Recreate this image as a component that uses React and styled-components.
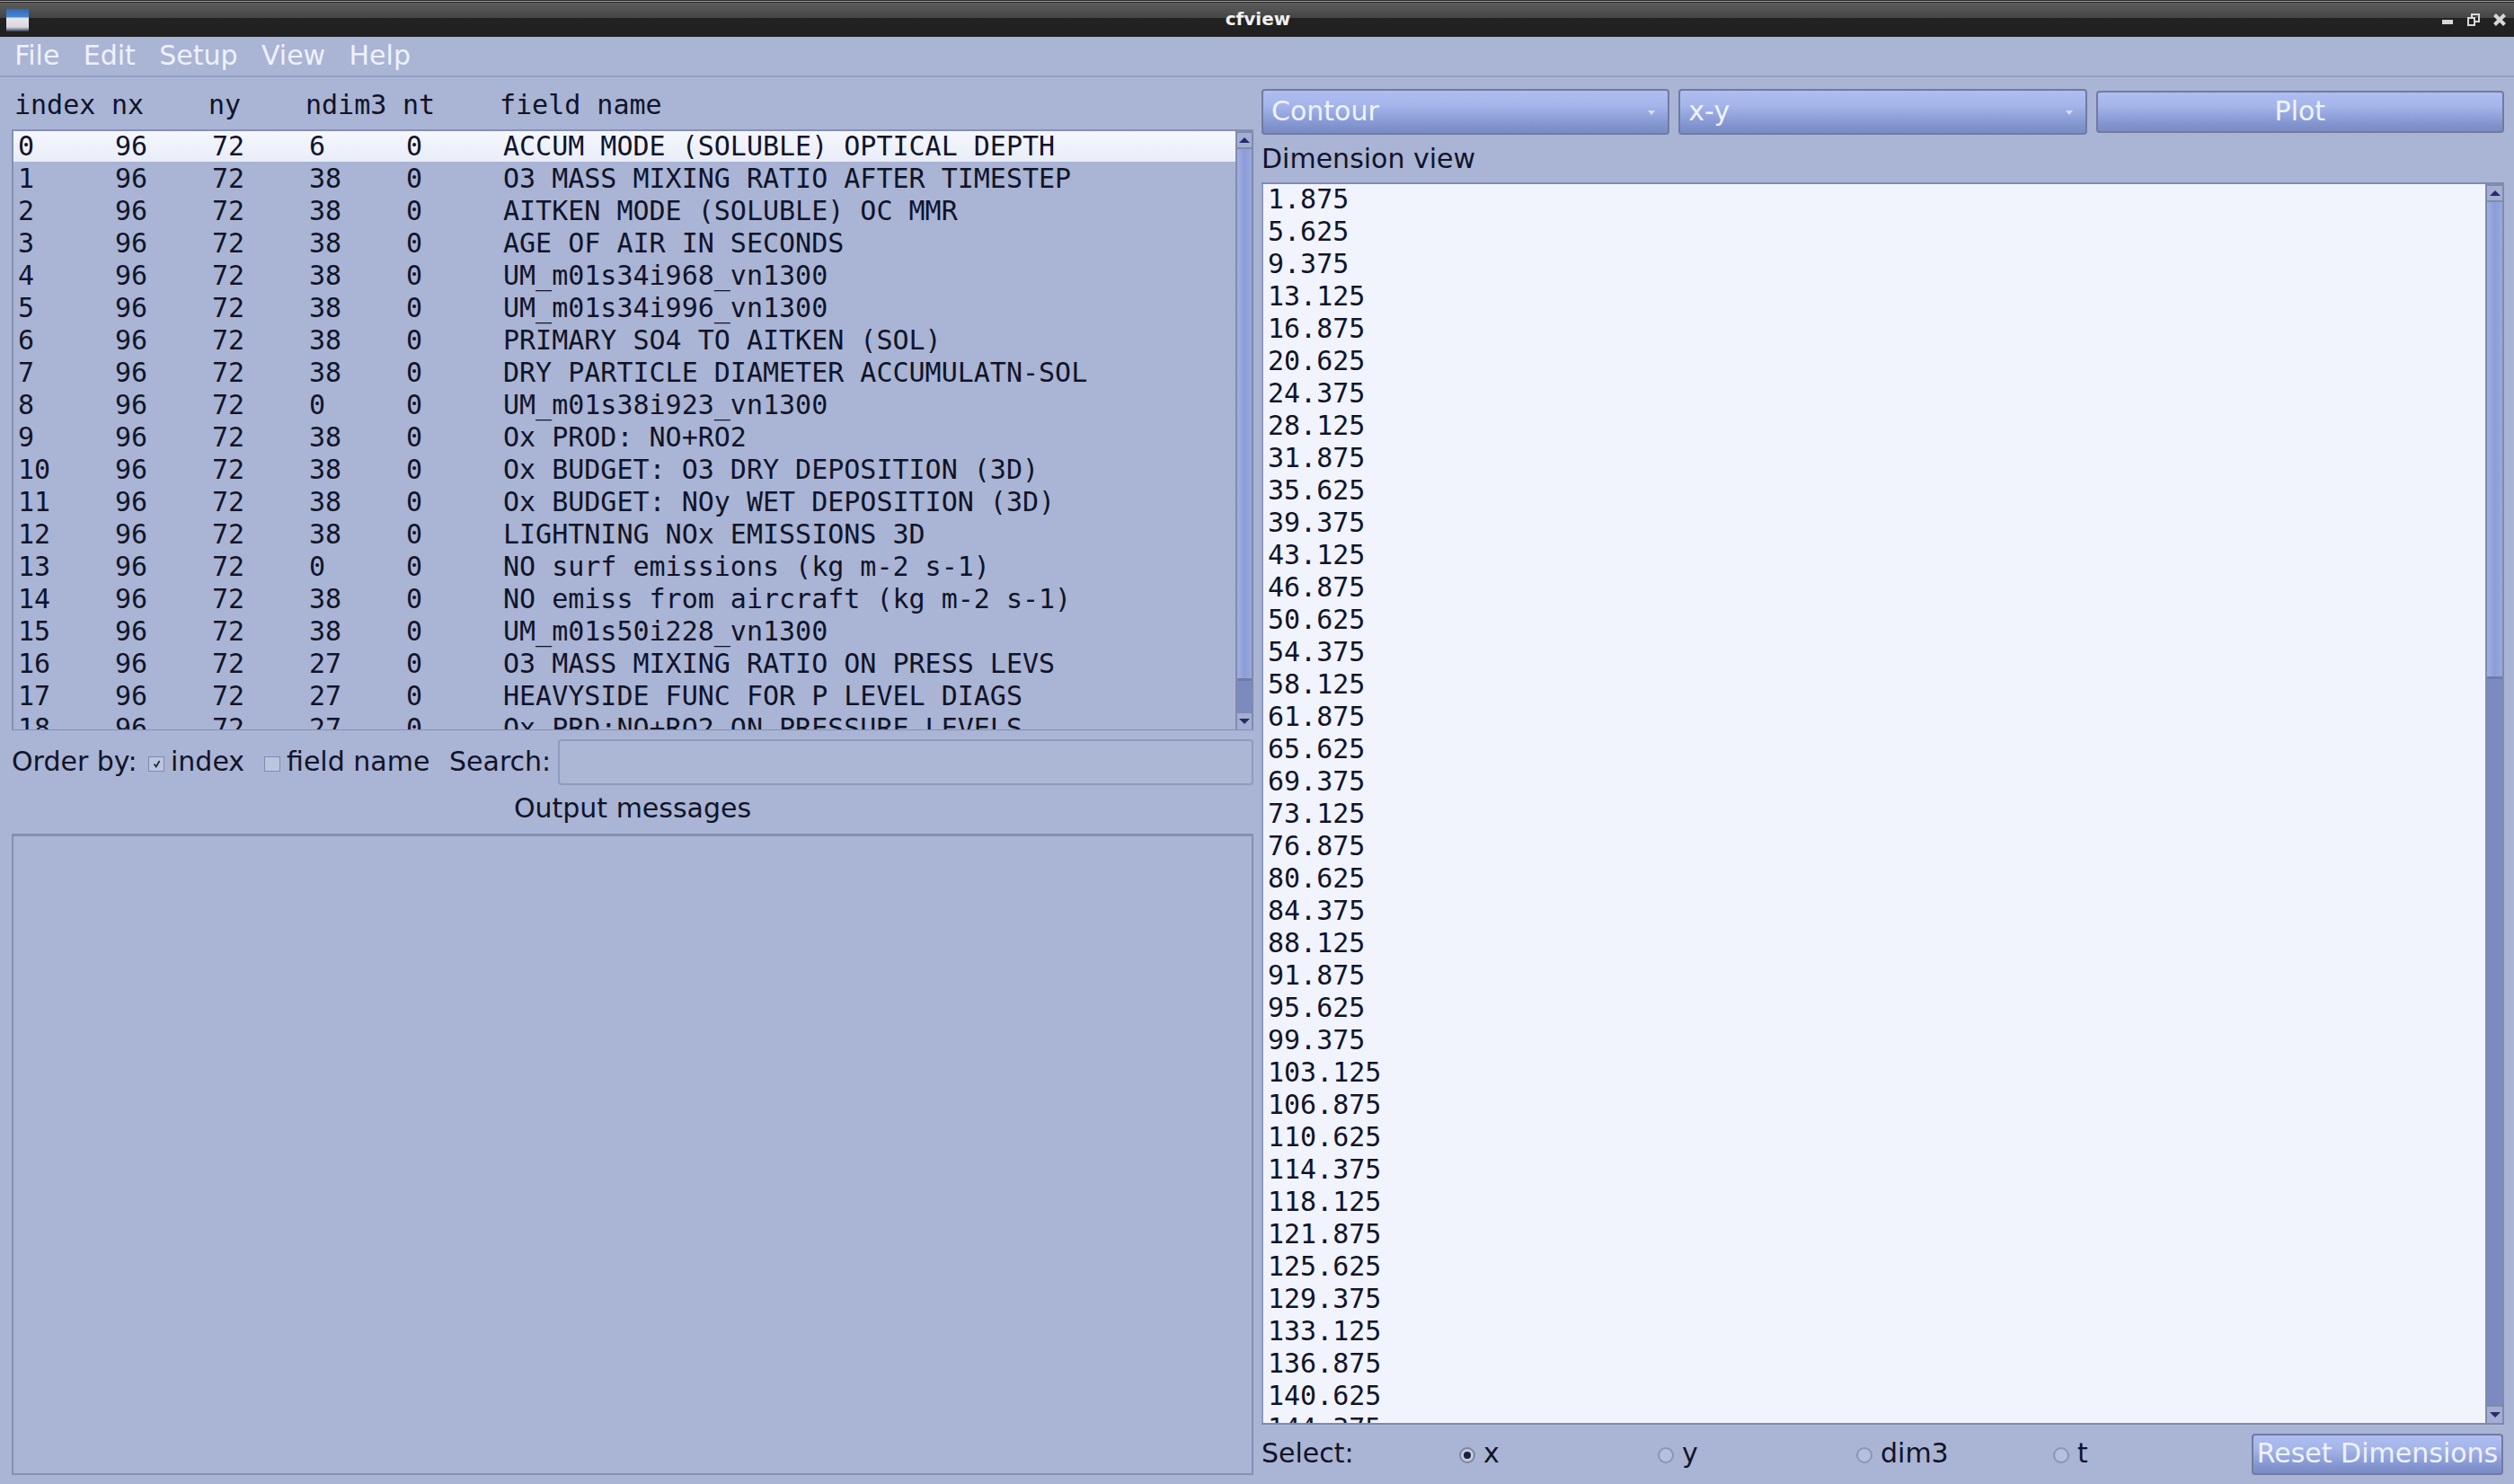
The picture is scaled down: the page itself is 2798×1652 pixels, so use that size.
import React from 'react';
import styled, { createGlobalStyle } from 'styled-components';

// Data
const fields = [
  [6, 'ACCUM MODE (SOLUBLE) OPTICAL DEPTH'],
  [38, 'O3 MASS MIXING RATIO AFTER TIMESTEP'],
  [38, 'AITKEN MODE (SOLUBLE) OC MMR'],
  [38, 'AGE OF AIR IN SECONDS'],
  [38, 'UM_m01s34i968_vn1300'],
  [38, 'UM_m01s34i996_vn1300'],
  [38, 'PRIMARY SO4 TO AITKEN (SOL)'],
  [38, 'DRY PARTICLE DIAMETER ACCUMULATN-SOL'],
  [0, 'UM_m01s38i923_vn1300'],
  [38, 'Ox PROD: NO+RO2'],
  [38, 'Ox BUDGET: O3 DRY DEPOSITION (3D)'],
  [38, 'Ox BUDGET: NOy WET DEPOSITION (3D)'],
  [38, 'LIGHTNING NOx EMISSIONS 3D'],
  [0, 'NO surf emissions (kg m-2 s-1)'],
  [38, 'NO emiss from aircraft (kg m-2 s-1)'],
  [38, 'UM_m01s50i228_vn1300'],
  [27, 'O3 MASS MIXING RATIO ON PRESS LEVS'],
  [27, 'HEAVYSIDE FUNC FOR P LEVEL DIAGS'],
  [27, 'Ox PRD:NO+RO2 ON PRESSURE LEVELS'],
];

const dimensions = Array.from({ length: 39 }, (_, i) => (1.875 + 3.75 * i).toFixed(3));
const menus = ['File', 'Edit', 'Setup', 'View', 'Help'];

const GlobalStyle = createGlobalStyle`
  html, body {
    margin: 0;
    padding: 0;
    background: #aab4d4;
  }
  * {
    box-sizing: border-box;
  }
`;

// Window chrome
const Window = styled.div`
  display: flex;
  flex-direction: column;
  width: 2798px;
  height: 1652px;
  overflow: hidden;
  background: #aab4d4;
  color: #10142a;
  font-family: "DejaVu Sans", sans-serif;
  font-size: 30px;
`;

const TitleBar = styled.div`
  display: grid;
  grid-template-columns: 1fr auto 1fr;
  align-items: center;
  height: 41px;
  flex: none;
  padding: 0 7px 0 7px;
  background: linear-gradient(
    #2a2a2a 0, #2a2a2a 1px, #9a9a9a 1px, #9a9a9a 2px, #2a2a2a 2px, #2a2a2a 3px,
    #5c5c5c 3px, #454545 20px, #222 20px, #202020 41px
  );
`;

const AppIcon = styled.div`
  width: 25px;
  height: 25px;
  margin-top: 3px;
  background: linear-gradient(#2f6ab8 0, #4a86cf 9px, #e4e6ee 10px, #dcd8dc 20px, #9aa0b0 22px, #33384c 25px);
`;

const TitleText = styled.div`
  margin-left: 2px;
  color: #f0f0f0;
  font-size: 20px;
  font-weight: bold;
  line-height: 38px;
`;

const WindowButtons = styled.div`
  display: flex;
  justify-content: flex-end;
  align-items: center;
  gap: 15px;
  padding: 2px 2px 0 0;
`;

const MenuBar = styled.div`
  display: flex;
  align-items: center;
  height: 45px;
  flex: none;
  padding: 0 0 2px 3px;
  border-bottom: 2px solid #949fc1;
`;

const MenuItem = styled.div`
  padding: 0 13.2px;
  color: #eef2ff;
`;

// Main panels
const Panels = styled.div`
  display: grid;
  grid-template-columns: 1382px 1383px;
  gap: 9px;
  flex: 1;
  min-height: 0;
  padding: 0 11px 0 13px;
`;

const LeftPanel = styled.div`
  display: flex;
  flex-direction: column;
  min-height: 0;
  padding-bottom: 10px;
`;

const RightPanel = styled.div`
  display: flex;
  flex-direction: column;
  min-height: 0;
  padding-top: 13px;
`;

const Columns = styled.div`
  display: grid;
  grid-template-columns: 108px 108px 108px 108px 108px 1fr;
  font-family: "DejaVu Sans Mono", monospace;
  white-space: pre;
`;

const HeaderRow = styled(Columns)`
  align-items: center;
  height: 58px;
  flex: none;
  padding-left: 3px;
  padding-top: 4px;
  line-height: 36px;
`;

const ListBox = styled.div`
  display: flex;
  height: 669px;
  flex: none;
  border: 2px solid #8490b3;
  border-right: none;
  border-bottom-width: 1px;
`;

const ListRows = styled.div`
  flex: 1;
  min-width: 0;
  overflow: hidden;
`;

const FieldRow = styled(Columns)`
  height: 36px;
  padding-left: 5px;
  line-height: 33px;
  ${(p) => p.$selected && 'background: linear-gradient(#f5f7fd, #e9edf8) no-repeat 0 0 / 100% 34px;'}
`;

// Scrollbars
const Scrollbar = styled.div`
  display: flex;
  flex-direction: column;
  width: ${(p) => p.$width}px;
  flex: none;
  background: #7c8bbf;
  border: solid #7f8aae;
  border-width: 0 2px;
`;

const ScrollButton = styled.div`
  display: flex;
  align-items: center;
  justify-content: center;
  height: 20px;
  flex: none;
  background: #a3aed2;
  border: solid #7f8aae;
  border-width: ${(p) => (p.$down ? '2px 0 0' : '2px 0')};
  &::after {
    content: "";
    border-left: 6px solid transparent;
    border-right: 6px solid transparent;
    ${(p) => (p.$down ? 'border-top: 6px solid #242c68;' : 'border-bottom: 6px solid #242c68;')}
  }
`;

const ScrollThumb = styled.div`
  flex: none;
  background: linear-gradient(90deg, #a2b0e2, #8a9cd8 50%, #9aa9de);
  border-bottom: 3px solid #6f7ca8;
`;

const ScrollTrack = styled.div`
  flex: 1;
`;

const ScrollBar = ({ width, thumb }) => (
  <Scrollbar $width={width}>
    <ScrollButton />
    <ScrollThumb style={{ height: thumb }} />
    <ScrollTrack />
    <ScrollButton $down />
  </Scrollbar>
);

// Order and search row
const OrderRow = styled.div`
  display: flex;
  align-items: center;
  height: 51px;
  flex: none;
  margin-top: 10px;
  line-height: 36px;
`;

const OrderLabel = styled.span`
  width: ${(p) => p.$width}px;
  flex: none;
  padding-bottom: 1px;
`;

const CheckOption = styled.label`
  display: flex;
  align-items: center;
  gap: 7px;
  width: ${(p) => p.$width}px;
  flex: none;
  padding-bottom: 1px;
`;

const CheckBox = styled.span`
  display: flex;
  align-items: center;
  justify-content: center;
  width: 18px;
  height: 17px;
  margin-top: 4px;
  border: 1px solid #7f8ab0;
  background: #bcc5e0;
`;

const SearchInput = styled.div`
  flex: 1;
  height: 51px;
  border: 2px solid #8f9abd;
  border-radius: 4px;
  background: #acb6d5;
`;

const OutputLabel = styled.div`
  display: flex;
  align-items: center;
  justify-content: center;
  height: 54px;
  flex: none;
  padding-bottom: 3px;
`;

const OutputBox = styled.div`
  flex: 1;
  border: 2px solid #8490b3;
  border-top-width: 3px;
  background: #aab4d4;
`;

// Right column controls
const ControlRow = styled.div`
  display: grid;
  grid-template-columns: 1fr 1fr 1fr;
  gap: 10px;
  align-items: center;
  height: 51px;
  flex: none;
`;

const raised = `
  border: 2px solid #6f7ba2;
  border-radius: 4px;
  background: linear-gradient(#aebdf2, #a5b5ea 35%, #8092cd 85%, #7d8cc2);
  color: #eef3ff;
`;

const Combo = styled.div`
  ${raised}
  display: flex;
  align-items: center;
  justify-content: space-between;
  height: 51px;
  padding: 0 14px 2px 9px;
  &::after {
    content: "";
    margin-top: 3px;
    border-left: 4px solid transparent;
    border-right: 4px solid transparent;
    border-top: 5px solid #d6def8;
  }
`;

const PlotButton = styled.div`
  ${raised}
  display: flex;
  align-items: center;
  justify-content: center;
  height: 47px;
  padding-bottom: 2px;
`;

const DimensionLabel = styled.div`
  display: flex;
  align-items: center;
  height: 53px;
  flex: none;
`;

const DimensionBox = styled.div`
  display: flex;
  height: 1383px;
  flex: none;
  border-top: 2px solid #7f8aae;
  border-bottom: 2px solid #7f8aae;
  background: #f1f4fd;
`;

const DimensionRows = styled.div`
  flex: 1;
  min-width: 0;
  overflow: hidden;
  border-left: 2px solid #8f9abd;
`;

const DimensionRow = styled.div`
  height: 36px;
  padding-left: 5px;
  font-family: "DejaVu Sans Mono", monospace;
  line-height: 34px;
`;

const SelectRow = styled.div`
  display: grid;
  grid-template-columns: 220px 221px 221px 219px 1fr auto;
  align-items: center;
  height: 66px;
  flex: none;
  padding: 10px 1px 10px 0;
`;

const SelectLabel = styled.span`
  padding-bottom: 3px;
`;

const RadioOption = styled.label`
  display: flex;
  align-items: center;
  gap: 9px;
  padding-bottom: 3px;
`;

const Radio = styled.span`
  display: flex;
  align-items: center;
  justify-content: center;
  width: 18px;
  height: 18px;
  margin-top: 4px;
  border: 2px solid ${(p) => (p.$checked ? '#7d86a6' : '#8a95b8')};
  border-radius: 50%;
  background: ${(p) => (p.$checked ? '#c2c9e0' : '#b6c0dc')};
  &::after {
    content: "";
    display: ${(p) => (p.$checked ? 'block' : 'none')};
    width: 8px;
    height: 8px;
    border-radius: 50%;
    background: #1c2038;
  }
`;

const ResetButton = styled.div`
  ${raised}
  display: flex;
  align-items: center;
  justify-content: center;
  width: 280px;
  height: 46px;
  padding-bottom: 3px;
  white-space: nowrap;
`;

const App = () => (
  <Window>
    <GlobalStyle />
    <TitleBar>
      <AppIcon />
      <TitleText>cfview</TitleText>
      <WindowButtons>
        <svg width="14" height="14" viewBox="0 0 14 14">
          <rect x="1" y="7" width="12" height="5" fill="#d8d8d8" />
        </svg>
        <svg width="14" height="14" viewBox="0 0 14 14" fill="none" stroke="#d8d8d8" strokeWidth="2">
          <rect x="5" y="1" width="8" height="8" />
          <rect x="1" y="5" width="7" height="8" fill="#222" />
        </svg>
        <svg width="14" height="14" viewBox="0 0 14 14" stroke="#d8d8d8" strokeWidth="4">
          <path d="M1.5 1.5 L12.5 12.5 M12.5 1.5 L1.5 12.5" />
        </svg>
      </WindowButtons>
    </TitleBar>

    <MenuBar>
      {menus.map((m) => (
        <MenuItem key={m}>{m}</MenuItem>
      ))}
    </MenuBar>

    <Panels>
      <LeftPanel>
        <HeaderRow>
          <span>index</span>
          <span>nx</span>
          <span>ny</span>
          <span>ndim3</span>
          <span>nt</span>
          <span>field name</span>
        </HeaderRow>
        <ListBox>
          <ListRows>
            {fields.map(([ndim, name], i) => (
              <FieldRow key={i} $selected={i === 0}>
                <span>{i}</span>
                <span>96</span>
                <span>72</span>
                <span>{ndim}</span>
                <span>0</span>
                <span>{name}</span>
              </FieldRow>
            ))}
          </ListRows>
          <ScrollBar width={20} thumb={592} />
        </ListBox>
        <OrderRow>
          <OrderLabel $width={152}>Order by:</OrderLabel>
          <CheckOption $width={129}>
            <CheckBox>
              <svg width="9" height="9" viewBox="0 0 9 9" fill="none" stroke="#1c2038" strokeWidth="1.6">
                <path d="M1.5 4.5 L3.8 7.5 L7.5 1" />
              </svg>
            </CheckBox>
            index
          </CheckOption>
          <CheckOption $width={206}>
            <CheckBox />
            field name
          </CheckOption>
          <OrderLabel $width={121}>Search:</OrderLabel>
          <SearchInput />
        </OrderRow>
        <OutputLabel>Output messages</OutputLabel>
        <OutputBox />
      </LeftPanel>

      <RightPanel>
        <ControlRow>
          <Combo>Contour</Combo>
          <Combo>x-y</Combo>
          <PlotButton>Plot</PlotButton>
        </ControlRow>
        <DimensionLabel>Dimension view</DimensionLabel>
        <DimensionBox>
          <DimensionRows>
            {dimensions.map((d) => (
              <DimensionRow key={d}>{d}</DimensionRow>
            ))}
          </DimensionRows>
          <ScrollBar width={21} thumb={531} />
        </DimensionBox>
        <SelectRow>
          <SelectLabel>Select:</SelectLabel>
          <RadioOption>
            <Radio $checked />
            x
          </RadioOption>
          <RadioOption>
            <Radio />
            y
          </RadioOption>
          <RadioOption>
            <Radio />
            dim3
          </RadioOption>
          <RadioOption>
            <Radio />
            t
          </RadioOption>
          <ResetButton>Reset Dimensions</ResetButton>
        </SelectRow>
      </RightPanel>
    </Panels>
  </Window>
);

export default App;
